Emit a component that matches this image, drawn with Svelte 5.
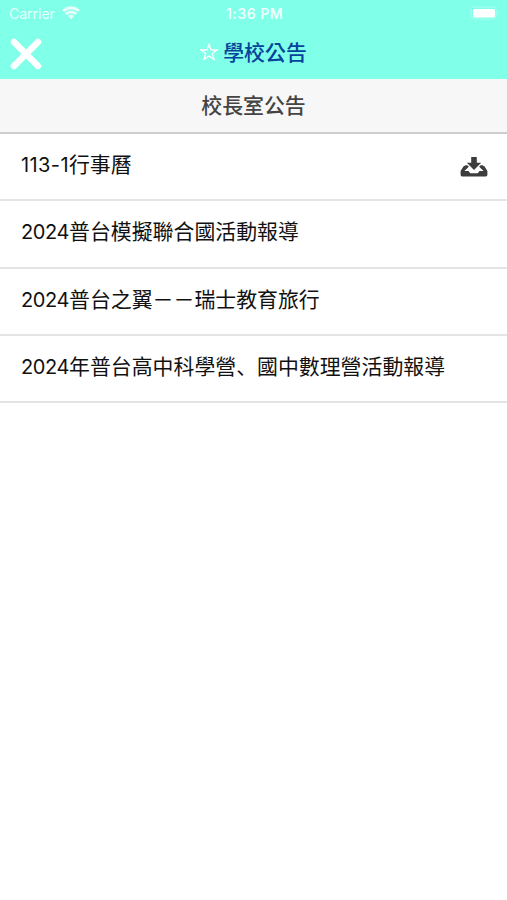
<script lang="ts">
  interface Notice {
    prefix: string;
    title: string;
    download?: boolean;
  }

  const notices: Notice[] = [
    { prefix: '113-1', title: '行事曆', download: true },
    { prefix: '2024', title: '普台模擬聯合國活動報導' },
    { prefix: '2024', title: '普台之翼－－瑞士教育旅行' },
    { prefix: '2024', title: '年普台高中科學營、國中數理營活動報導' }
  ];
</script>

<div class="screen">
  <header>
    <div class="status-bar">
      <div class="carrier">
        <span>Carrier</span>
        <svg class="wifi" viewBox="0 0 18 14" aria-hidden="true">
          <path d="M1 4.8Q9-1.4 17 4.8M3.7 8Q9 3.9 14.3 8" />
          <path class="dot" d="M5.9 10.1Q9 7.6 12.1 10.1L9 13.3Z" />
        </svg>
      </div>
      <span class="time">1:36 PM</span>
      <svg class="battery" viewBox="0 0 30 14" aria-hidden="true">
        <rect class="shell" x="1" y="1" width="25" height="12" rx="3" />
        <rect x="3" y="3" width="22" height="8.5" rx="1.5" />
        <path class="cap" d="M27.5 5v4q2-2 0-4Z" />
      </svg>
    </div>
    <div class="nav-bar">
      <button class="close" aria-label="關閉">
        <svg viewBox="0 0 32 32">
          <path d="M4 4L28 28M28 4L4 28" />
        </svg>
      </button>
      <h1>
        <svg class="star" viewBox="0 0 18 18" aria-hidden="true">
          <path d="M9 1.4L11 6.9L17 7L12.3 10.6L14 16.4L9 13L4 16.4L5.7 10.6L1 7L7 6.9Z" />
        </svg>
        <span>學校公告</span>
      </h1>
    </div>
  </header>

  <h2>校長室公告</h2>

  <ul>
    {#each notices as notice}
      <li>
        <span class="title"><span class="prefix" class:narrow={notice.prefix.startsWith('2024')}>{notice.prefix}</span>{notice.title}</span>
        {#if notice.download}
          <svg class="download" viewBox="0 0 28 20" aria-hidden="true">
            <path d="M11.2 0H16.8V5.8H21.2L14 13L6.8 5.8H11.2Z" />
            <path d="M5.6 8.2H7.4L8.8 9.8L4.4 14H8.5L10.2 16.2H17.8L19.5 14H23.6L19.2 9.8L20.6 8.2H22.4L24.6 9.5L27.4 14V17.8Q27.4 19.5 25.8 19.5H2.2Q.6 19.5 .6 17.8V14L3.4 9.5Z" />
          </svg>
        {/if}
      </li>
    {/each}
  </ul>
</div>

<style>
  :global(body) {
    background: #fff;
  }

  .screen {
    min-height: 900px;
    box-sizing: border-box;
    overflow: hidden;
    background: #fff;
    color: #111;
    font-family: Inter, 'Noto Sans CJK SC', sans-serif;
  }

  header {
    height: 79px;
    background: #80ffe9;
  }

  .status-bar {
    display: grid;
    grid-template-columns: 1fr auto 1fr;
    align-items: center;
    height: 27px;
    padding: 0 7px 0 9px;
    color: #fff;
    font-size: 14px;
    line-height: 27px;
  }

  .carrier {
    display: flex;
    align-items: center;
    gap: 7px;
    opacity: 0.8;
  }

  .wifi {
    width: 18px;
    height: 14px;
    margin-top: -1px;
    fill: none;
    stroke: #fff;
    stroke-width: 2.8;
  }

  .wifi .dot {
    fill: #fff;
    stroke: none;
  }

  .time {
    font-size: 14px;
    font-weight: 600;
    letter-spacing: 0.5px;
    opacity: 0.85;
  }

  .battery {
    justify-self: end;
    width: 30px;
    height: 14px;
    margin-top: -1px;
    fill: #fff;
  }

  .battery .shell {
    fill: none;
    stroke: #fff;
    stroke-opacity: 0.3;
  }

  .battery .cap {
    fill-opacity: 0.3;
  }

  .nav-bar {
    display: grid;
    grid-template-columns: 1fr auto 1fr;
    align-items: center;
    height: 52px;
  }

  .close {
    display: flex;
    width: 32px;
    margin-left: 9.5px;
    padding: 2px 0 0;
    border: 0;
    background: none;
  }

  .close svg {
    width: 32px;
    height: 32px;
    stroke: #fff;
    stroke-width: 6.5;
    stroke-linecap: round;
  }

  h1 {
    display: flex;
    align-items: center;
    gap: 5px;
    margin: 0;
    color: #06439a;
    font-family: Inter, 'Noto Sans CJK TC', sans-serif;
    font-size: 20.9px;
    font-weight: 500;
    line-height: 52px;
  }

  .star {
    width: 18px;
    height: 18px;
    margin-top: -3px;
    fill: none;
    stroke: #fff;
    stroke-width: 1.3;
  }

  h2 {
    height: 53px;
    margin: 0;
    border-bottom: 2px solid #cecece;
    background: #f7f7f7;
    color: #444;
    font-size: 20.9px;
    font-weight: 500;
    line-height: 54px;
    text-align: center;
  }

  ul {
    margin: 0;
    padding: 0;
    list-style: none;
  }

  li {
    display: flex;
    align-items: center;
    justify-content: space-between;
    box-sizing: border-box;
    height: 67.25px;
    padding: 0 19px 7px 21px;
    border-bottom: 2px solid #e4e4e4;
    font-size: 20.9px;
    white-space: nowrap;
  }

  .prefix {
    font-size: 20px;
    letter-spacing: 0.4px;
  }

  .prefix.narrow {
    letter-spacing: -0.4px;
  }

  .download {
    width: 28px;
    height: 20px;
    margin-top: 7px;
    fill: #3d3d3d;
  }
</style>
